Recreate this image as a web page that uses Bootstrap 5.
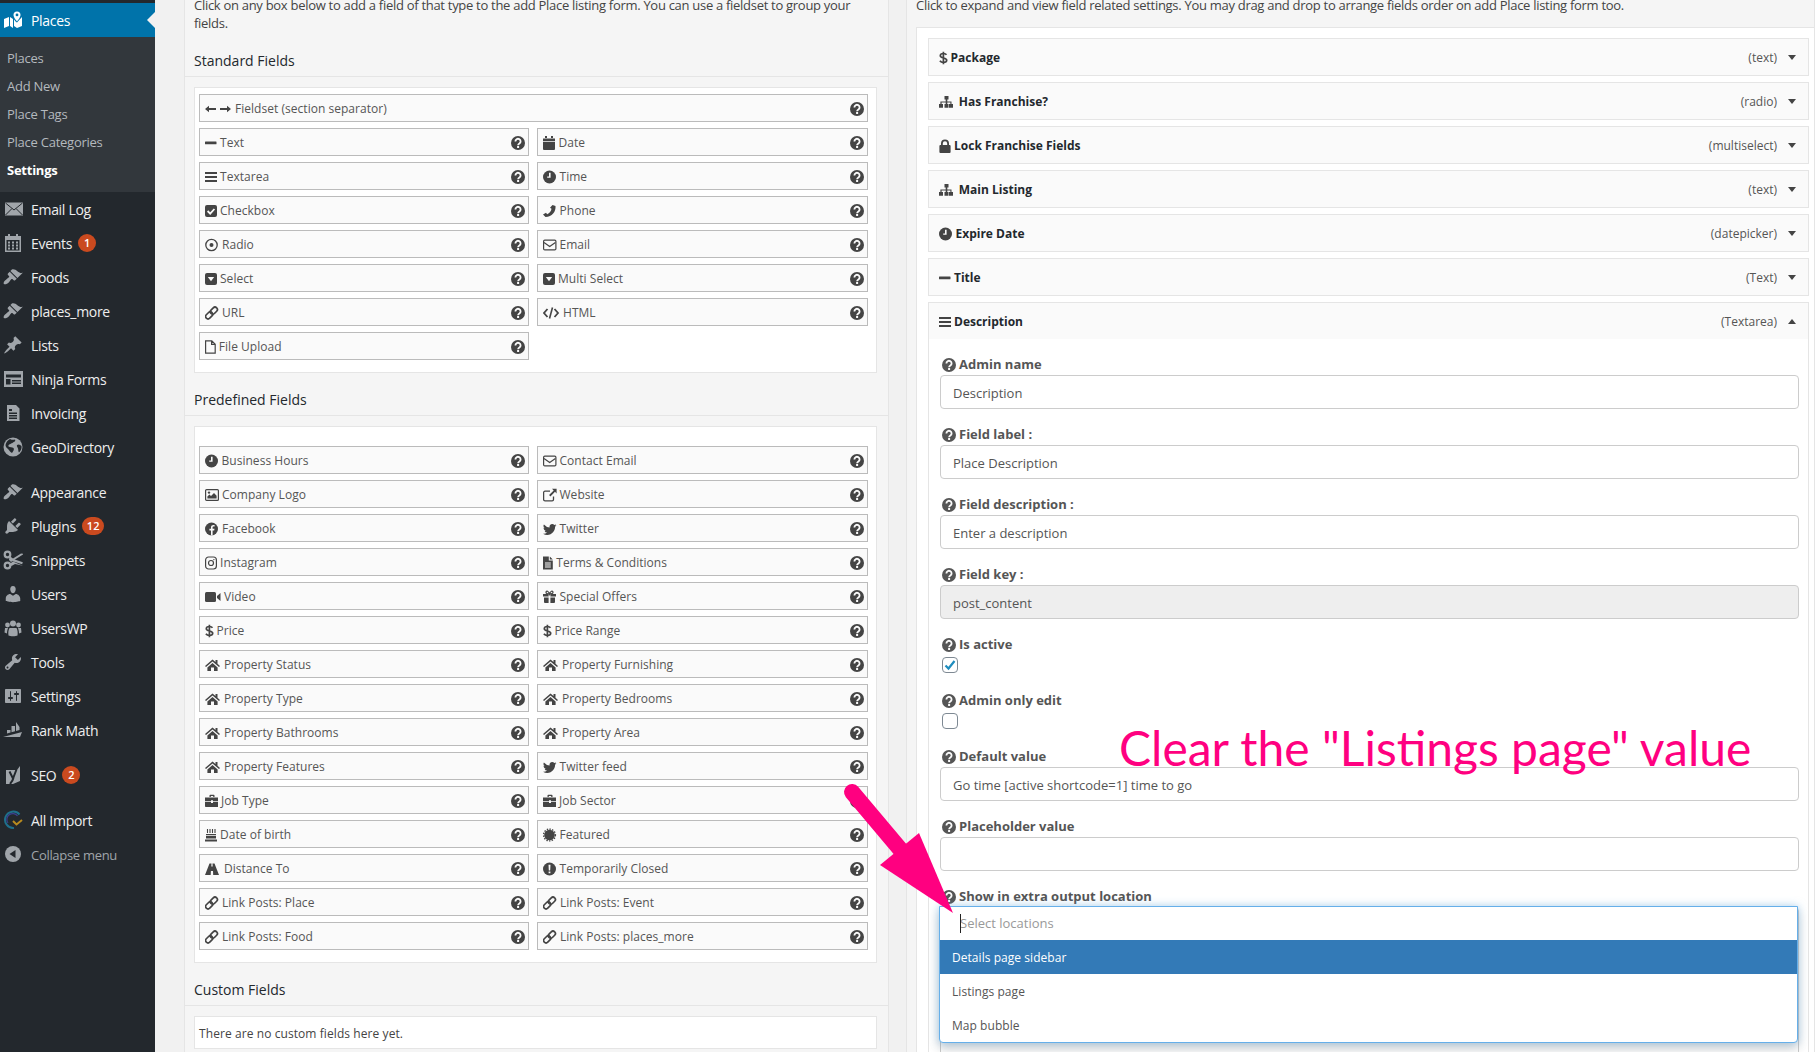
<!DOCTYPE html>
<html lang="en">
<head>
  <meta charset="UTF-8" />
  <meta name="viewport" content="width=device-width, initial-scale=1.0"/>
  <title>Place Settings</title>
  <link href="https://cdn.jsdelivr.net/npm/bootstrap@5.3.3/dist/css/bootstrap.min.css" rel="stylesheet">
  <style>
    html, body { height: 100%; }
    body { font-family: "Open Sans", sans-serif; font-size: 13px; color: #444; background: #f1f1f1; overflow: hidden; }
    .wp-shell { height: 1052px; overflow: hidden; position: relative; }

    /* admin menu */
    .wp-side { width: 155px; flex: 0 0 155px; background: #23282d; padding-top: 3px; }
    .side-item { height: 34px; color: #eee; font-size: 14px; letter-spacing: -.3px; padding-left: 31px; position: relative; }
    .side-item svg { position: absolute; left: 3px; top: 7px; fill: #a0a5aa; }
    .side-item.sel { background: #0073aa; color: #fff; }
    .side-item.sel svg { fill: #fff; }
    .side-item.sel::after { content: ""; position: absolute; right: 0; top: 9px; border: 8px solid transparent; border-right-color: #f1f1f1; border-left-width: 0; }
    .side-sub { background: #32373c; padding: 7px 0 8px; }
    .side-sub div { height: 28px; line-height: 28px; padding-left: 7px; color: #b4b9be; font-size: 13px; letter-spacing: -.25px; }
    .side-sub div.on { color: #fff; font-weight: 700; }
    .side-gap { height: 11px; }
    .side-item.side-muted { color: #a0a5aa; font-size: 13px; padding-top: 3px; }
    .side-num { background: #ca4a1f; color: #fff; font-size: 11px; font-weight: 600; letter-spacing: 0; height: 18px; min-width: 18px; padding: 0 5px; border-radius: 9px; margin-left: 6px; }

    /* panels */
    .wp-main { flex: 1 1 auto; display: flex; gap: 17px; padding-left: 29px; margin-top: -4px; min-width: 0; }
    .pane { background: #f5f5f5; border: 1px solid #e5e5e5; border-width: 0 1px; }
    .pane-left { width: 705px; flex: 0 0 705px; }
    .pane-right { flex: 1 1 auto; min-width: 0; padding-left: 9px; }
    .pane-note { margin: 0 0 19px; padding: 0 9px; line-height: 18px; color: #444; letter-spacing: -.29px; }
    .pane-right .pane-note { margin-bottom: 0; }
    .pane-head { font-size: 14px; line-height: 20px; color: #23282d; padding: 0 9px 5px; border-bottom: 1px solid #e5e5e5; margin: 17px 0 10px; }
    .white-box { background: #fff; border: 1px solid #e5e5e5; margin: 0 11px 0 9px; padding: 6px 5px 12px 4px; }
    .predef-box { padding-top: 19px; }
    .field-grid { display: grid; grid-template-columns: 330px 331px; column-gap: 8px; row-gap: 6px; }
    .field-btn { height: 28px; border: 1px solid #bbb; background: #fafafa; color: #555; font-size: 12px; letter-spacing: .03px; padding: 2px 3px 0 5px; display: flex; align-items: center; white-space: nowrap; }
    .field-btn.wide { grid-column: 1 / 3; }
    .fi { fill: #444; flex: none; margin-right: 3px; }
    .qm { fill: #444; flex: none; margin-left: auto; margin-right: 0; }
    .empty-box { margin: 0 11px 0 9px; background: #fff; border: 1px solid #e5e5e5; height: 33px; line-height: 33px; padding-left: 4px; font-size: 12px; letter-spacing: .08px; color: #444; }

    /* sortable list on the right */
    .sort-box { background: #fff; border: 1px solid #e5e5e5; margin-top: 13px; padding: 10px 0 0 11px; border-right: 0; min-height: 1100px; }
    .sort-row { height: 38px; border: 1px solid #e5e5e5; background: #fafafa; margin: 0 5px 6px 0; padding: 1px 12px 0 10px; display: flex; align-items: center; font-size: 12px; }
    .sort-row b { color: #23282d; font-weight: 700; }
    .sort-type { margin-left: auto; color: #555; }
    .sort-caret { width: 0; height: 0; border: 4px solid transparent; border-top: 5px solid #444; border-bottom: 0; margin-left: 11px; margin-right: 0; }
    .sort-caret.up { border-top: 0; border-bottom: 5px solid #444; }
    .sort-open { border: 1px solid #e5e5e5; border-top: 0; margin: -7px 5px 0 0; padding: 14px 9px 0 11px; background: #fff; }
    .form-rowx { margin-bottom: 14px; }
    .form-rowx label { display: flex; align-items: center; height: 22px; padding-top: 2px; font-weight: 700; font-size: 13px; color: #555; margin: 0; }
    .form-rowx label svg { fill: #555; margin: 0 3px 0 2px; }
    .form-control.wp-input { height: 34px; border-radius: 4px; border: 1px solid #ccc; font-size: 13px; color: #555; padding: 7px 12px 5px; box-shadow: none; }
    .form-control.wp-input:disabled { background: #eee; }
    .form-control.wp-input.loc-under { height: 160px; }
    .wp-check { width: 16px; height: 16px; border: 1px solid #7e8993; border-radius: 4px; background: #fff; margin: 2px 0 0 2px; display: flex; align-items: center; justify-content: center; }
    .check-row { margin-bottom: 16px; }
    .loc-wrap { position: relative; }
    .loc-drop { position: absolute; left: -1px; right: 1px; top: -1px; z-index: 3; background: #fff; border: 1px solid #66afe9; border-radius: 0 0 4px 4px; box-shadow: 0 0 8px rgba(102,175,233,.5), 0 6px 12px rgba(0,0,0,.18); }
    .loc-input { height: 33px; padding: 7px 0 0 20px; color: #999; position: relative; font-size: 13px; }
    .loc-input::before { content: ""; position: absolute; left: 20px; top: 7px; height: 19px; border-left: 1px solid #222; }
    .loc-opt { height: 34px; line-height: 36px; padding-left: 12px; color: #555; font-size: 12px; letter-spacing: .05px; }
    .loc-opt.hot { background: #337ab7; color: #fff; }

    /* pink note on top of the shot */
    .shot-note { position: absolute; left: 1119px; top: 718px; font-family: Lato, sans-serif; font-size: 48px; line-height: 60px; color: #ff0080; white-space: nowrap; z-index: 5; }
    .shot-arrow { position: absolute; left: 0; top: 0; z-index: 6; pointer-events: none; }
  </style>
</head>
<body>
  <div class="wp-shell d-flex">
    <div class="wp-side" id="sideMenu"></div>

    <div class="wp-main">
      <div class="pane pane-left">
        <p class="pane-note">Click on any box below to add a field of that type to the add Place listing form. You can use a fieldset to group your fields.</p>
        <div class="pane-head">Standard Fields</div>
        <div class="white-box"><div class="field-grid" id="stdFields"></div></div>
        <div class="pane-head">Predefined Fields</div>
        <div class="white-box predef-box"><div class="field-grid" id="preFields"></div></div>
        <div class="pane-head">Custom Fields</div>
        <div class="empty-box">There are no custom fields here yet.</div>
      </div>

      <div class="pane pane-right">
        <p class="pane-note ps-0">Click to expand and view field related settings. You may drag and drop to arrange fields order on add Place listing form too.</p>
        <div class="sort-box">
          <div id="sortRows"></div>
          <div class="sort-open" id="descForm"></div>
        </div>
      </div>
    </div>

    <div class="shot-note">Clear the "Listings page" value</div>
    <svg class="shot-arrow" width="1815" height="1052" viewBox="0 0 1815 1052">
      <line x1="852" y1="792" x2="905" y2="855" stroke="#ff0080" stroke-width="16" stroke-linecap="round"/>
      <polygon points="919,833 880,865 953,913" fill="#ff0080"/>
    </svg>
  </div>

  <script src="https://cdn.jsdelivr.net/npm/bootstrap@5.3.3/dist/js/bootstrap.bundle.min.js"></script>
  <script>
    const W = '#fafafa';
    const bird = 'M5.026 15c6.038 0 9.341-5.003 9.341-9.334 0-.14 0-.282-.006-.422A6.685 6.685 0 0 0 16 3.542a6.658 6.658 0 0 1-1.889.518 3.301 3.301 0 0 0 1.447-1.817 6.533 6.533 0 0 1-2.087.793A3.286 3.286 0 0 0 7.875 6.03a9.325 9.325 0 0 1-6.767-3.429 3.289 3.289 0 0 0 1.018 4.382A3.323 3.323 0 0 1 .64 6.575v.045a3.288 3.288 0 0 0 2.632 3.218 3.203 3.203 0 0 1-.865.115 3.23 3.23 0 0 1-.614-.057 3.283 3.283 0 0 0 3.067 2.277A6.588 6.588 0 0 1 .78 13.58a6.32 6.32 0 0 1-.78-.045A9.344 9.344 0 0 0 5.026 15z';

    // field icons: [advance width including the gap, svg body], drawn on a 14px high box
    const icons = {
      arrows: [30, '<path d="M0 7l4-3.200v2.200h7v2H4v2.200zM26 7l-4-3.200v2.200h-7v2h7v2.200z"/>'],
      minus: [15, '<rect y="5.600" width="11.500" height="2.600" rx=".5"/>'],
      cal: [15.5, '<path d="M2 0h2v2H2zM8 0h2v2H8zM0 2.500h12V5H0zM0 5.800h12V13a1 1 0 0 1-1 1H1a1 1 0 0 1-1-1z"/>'],
      bars: [15, '<path d="M0 2h12v2H0zM0 6h12v2H0zM0 10h12v2H0z"/>'],
      clock: [16.5, '<circle cx="6.500" cy="7" r="6.500"/><path d="M6 2.800h1.600v5H4.200V6.400H6z" fill="' + W + '"/>'],
      check: [15, '<rect y="1" width="12" height="12" rx="2"/><path d="M2.600 7l2.600 2.600 4.200-4.600" fill="none" stroke="' + W + '" stroke-width="1.800"/>'],
      phone: [16.5, '<path d="M9.500 1l3 1c.6 5.500-3.500 11-10 11L0 10.400l3-1.600 1.200 1.500c2.300-1 4-3.400 4.300-5.600L7 3.800z"/>'],
      dot: [17, '<circle cx="6.500" cy="7" r="5.700" fill="none" stroke="#444" stroke-width="1.300"/><circle cx="6.500" cy="7" r="2"/>'],
      env: [16.5, '<rect x=".6" y="2.100" width="12.300" height="9.800" rx="1.200" fill="none" stroke="#444" stroke-width="1.200"/><path d="M1 4.600l5.700 4 5.700-4" fill="none" stroke="#444" stroke-width="1.200"/>'],
      caret: [15, '<rect y="1" width="12" height="12" rx="2"/><path d="M2.800 5h6.400L6 9.200z" fill="' + W + '"/>'],
      link: [17, '<g transform="rotate(-45 6.500 7)" fill="none" stroke="#444" stroke-width="1.700"><rect x="-.8" y="4.600" width="8" height="4.800" rx="2.400"/><rect x="5.800" y="4.600" width="8" height="4.800" rx="2.400"/></g>'],
      code: [20, '<path d="M4.500 3L1 7l3.500 4M11.500 3L15 7l-3.500 4" fill="none" stroke="#444" stroke-width="1.800"/><path d="M9.500 1.500L6.500 12.500" stroke="#444" stroke-width="1.600"/>'],
      file: [13.8, '<path d="M.6.8h6.200l3.400 3.400v9H.6zM6.600 1v3.400h3.400" fill="none" stroke="#444" stroke-width="1.200"/>'],
      pic: [17, '<rect x=".6" y="1.600" width="12.800" height="10.800" rx="1" fill="none" stroke="#444" stroke-width="1.200"/><path d="M2.400 10.500V8.600l2-2 1.600 1.500 3-3 2.600 2.600v2.800z"/><circle cx="4" cy="4.600" r="1.200"/>'],
      ext: [16.5, '<path d="M10.500 8.500v3a1.400 1.400 0 0 1-1.400 1.400H2a1.400 1.400 0 0 1-1.400-1.400V4.600A1.400 1.400 0 0 1 2 3.200h5" fill="none" stroke="#444" stroke-width="1.300"/><path d="M9 .8h4.600v4.600l-1.600-1.600-4.600 4.600-1.300-1.300 4.600-4.600z"/>'],
      fb: [17, '<circle cx="6.500" cy="7" r="6.500"/><path d="M7.600 13.400V8.600h1.600l.3-1.900H7.600V5.600c0-.6.3-1 1-1h1V3c-1.900-.4-3.600.2-3.600 2.300v1.400H4.400v1.900H6v4.800z" fill="' + W + '"/>'],
      tw: [16.5, '<g transform="scale(.84) translate(0 .4)"><path d="' + bird + '"/></g>'],
      insta: [15, '<rect x=".6" y="1" width="10.800" height="12" rx="3" fill="none" stroke="#444" stroke-width="1.200"/><circle cx="6" cy="7" r="2.500" fill="none" stroke="#444" stroke-width="1.200"/><circle cx="8.900" cy="3.600" r=".7"/>'],
      doc: [13.3, '<path d="M0 .5h5.800v4h4v9H0zM6.800.5l3 3h-3z"/><path d="M2 7h5.800M2 9h5.800M2 11h5.800" stroke="' + W + '" stroke-width="1"/>'],
      video: [19, '<rect y="2" width="11" height="10" rx="1.500"/><path d="M12 6l3.500-3v8L12 8z"/>'],
      gift: [16.5, '<path d="M0 4h5.600v2.600H0zM7.400 4H13v2.600H7.400zM1 7.400h4.600V13H2a1 1 0 0 1-1-1zM7.400 7.400H12V12a1 1 0 0 1-1 1H7.400z"/><path d="M6.400 4C4 4 2.800 3.400 3 2c.3-1.600 2.600-1.200 3.500 2 .9-3.200 3.200-3.600 3.500-2 .2 1.400-1 2-3.600 2z" fill="none" stroke="#444" stroke-width="1.200"/>'],
      dollar: [11.5, '<path d="M7.500 3.800C6.800 2.800 5.800 2.500 4.400 2.500 2.700 2.500 1.300 3.300 1.300 4.800 1.300 7.800 7.700 6.200 7.700 9.300 7.700 10.800 6.200 11.500 4.400 11.500 3 11.500 1.700 11 .9 9.800M4.400.8V13.200" fill="none" stroke="#444" stroke-width="1.700"/>'],
      home: [19, '<path d="M7.500 1.600L0 8l1 1.100 6.500-5.600L14 9.100 15 8l-2.500-2.200V2h-2v2z"/><path d="M2.400 9.400l5.100-4.400 5.100 4.400V13H9V9.600H6V13H2.400z"/>'],
      case: [16, '<path d="M4.500 3V1.600A.8.8 0 0 1 5.300.8h3.400a.8.8 0 0 1 .8.8V3h-1.300V2.100H5.800V3zM0 3.400h14v3.800H8v-1H6v1H0zM0 8h6v1h2V8h6v4.200a.8.8 0 0 1-.8.8H.8a.8.8 0 0 1-.8-.8z"/>'],
      cake: [15, '<path d="M1 8h10v2.600H1zM0 11.400h12V13.500H0zM1 7.200h10V6H1z"/><path d="M2.500 1v4M5 1v4M7.500 1v4M10 1v4" stroke="#444" stroke-width="1.100"/>'],
      cert: [16.5, '<circle cx="6.500" cy="7" r="5.300"/><circle cx="6.500" cy="7" r="5.900" fill="none" stroke="#444" stroke-width="1.400" stroke-dasharray="1.400 1.300"/>'],
      road: [19, '<path d="M4.500 1.500h2l-.2 3h1.400l-.2-3h2l4.500 11.500H8.200L8 9H5.900l-.2 4H0z"/>'],
      warn: [16.5, '<circle cx="6.500" cy="7" r="6.500"/><path d="M5.500 2.800h2L7.200 8.600H5.800zM5.600 9.600h1.800v1.700H5.600z" fill="' + W + '"/>'],
      tree: [19.8, '<path d="M5.500 1h4v3.400H8.300v2h4.200V9H14v3.800h-4V9h1.400V7.600H8.300V9h1.200v3.800h-4V9h1.200V7.600H2.600V9H4v3.800H0V9h1.400V6.400h5.300v-2H5.500z"/>'],
      lock: [15, '<path d="M2 6V4.400a4 4 0 0 1 8 0V6h.6a1 1 0 0 1 1 1v6a1 1 0 0 1-1 1H1.400a1 1 0 0 1-1-1V7a1 1 0 0 1 1-1zM3.800 6h4.400V4.400a2.200 2.200 0 0 0-4.400 0z"/>']
    };
    const svgIcon = (name) => {
      const [adv, body] = icons[name];
      const w = Math.max(adv - 3, 1);
      return `<svg class="fi" width="${w}" height="14" viewBox="0 0 ${w} 14" aria-hidden="true">${body}</svg>`;
    };
    const helpMark = (cls, size) => `<svg class="${cls}" width="${size}" height="${size}" viewBox="0 0 14 14" aria-hidden="true"><circle cx="7" cy="7" r="7"/><path d="M4.400 5.500a2.600 2.600 0 1 1 4 2.100c-.9.6-1.300.9-1.300 1.700" fill="none" stroke="#fafafa" stroke-width="1.800"/><rect x="6.100" y="10" width="2" height="2" fill="#fafafa"/></svg>`;

    const standard = [
      ['arrows', 'Fieldset (section separator)', true],
      ['minus', 'Text'], ['cal', 'Date'],
      ['bars', 'Textarea'], ['clock', 'Time'],
      ['check', 'Checkbox'], ['phone', 'Phone'],
      ['dot', 'Radio'], ['env', 'Email'],
      ['caret', 'Select'], ['caret', 'Multi Select'],
      ['link', 'URL'], ['code', 'HTML'],
      ['file', 'File Upload']
    ];
    const predefined = [
      ['clock', 'Business Hours'], ['env', 'Contact Email'],
      ['pic', 'Company Logo'], ['ext', 'Website'],
      ['fb', 'Facebook'], ['tw', 'Twitter'],
      ['insta', 'Instagram'], ['doc', 'Terms &amp; Conditions'],
      ['video', 'Video'], ['gift', 'Special Offers'],
      ['dollar', 'Price'], ['dollar', 'Price Range'],
      ['home', 'Property Status'], ['home', 'Property Furnishing'],
      ['home', 'Property Type'], ['home', 'Property Bedrooms'],
      ['home', 'Property Bathrooms'], ['home', 'Property Area'],
      ['home', 'Property Features'], ['tw', 'Twitter feed'],
      ['case', 'Job Type'], ['case', 'Job Sector'],
      ['cake', 'Date of birth'], ['cert', 'Featured'],
      ['road', 'Distance To'], ['warn', 'Temporarily Closed'],
      ['link', 'Link Posts: Place'], ['link', 'Link Posts: Event'],
      ['link', 'Link Posts: Food'], ['link', 'Link Posts: places_more']
    ];
    const fieldBtn = ([icon, label, wide]) => `<div class="field-btn${wide ? ' wide' : ''}">${svgIcon(icon)}<span>${label}</span>${helpMark('qm', 14)}</div>`;
    document.getElementById('stdFields').innerHTML = standard.map(fieldBtn).join('');
    document.getElementById('preFields').innerHTML = predefined.map(fieldBtn).join('');

    // right hand sortable rows
    const rows = [
      ['dollar', 'Package', '(text)'],
      ['tree', 'Has Franchise?', '(radio)'],
      ['lock', 'Lock Franchise Fields', '(multiselect)'],
      ['tree', 'Main Listing', '(text)'],
      ['clock', 'Expire Date', '(datepicker)'],
      ['minus', 'Title', '(Text)'],
      ['bars', 'Description', '(Textarea)', true]
    ];
    document.getElementById('sortRows').innerHTML = rows.map(([icon, name, type, open]) =>
      `<div class="sort-row">${svgIcon(icon)}<b>${name}</b><span class="sort-type">${type}</span><span class="sort-caret${open ? ' up' : ''}"></span></div>`).join('');

    const inputField = (label, value, disabled) => `
      <div class="form-rowx"><label>${helpMark('', 14)}${label}</label>
      <input type="text" class="form-control wp-input" value="${value}"${disabled ? ' disabled' : ''}></div>`;
    const checkField = (label, on) => `
      <div class="form-rowx check-row"><label>${helpMark('', 14)}${label}</label>
      <div class="wp-check">${on ? '<svg width="12" height="12" viewBox="0 0 12 12"><path d="M1.500 6.500l3 3 6-7.500" fill="none" stroke="#1e8cbe" stroke-width="2.200"/></svg>' : ''}</div></div>`;
    document.getElementById('descForm').innerHTML =
      inputField('Admin name', 'Description') +
      inputField('Field label :', 'Place Description') +
      inputField('Field description :', 'Enter a description') +
      inputField('Field key :', 'post_content', true) +
      checkField('Is active', true) +
      checkField('Admin only edit', false) +
      inputField('Default value', 'Go time [active shortcode=1] time to go') +
      inputField('Placeholder value', '') +
      `<div class="form-rowx"><label>${helpMark('', 14)}Show in extra output location</label>
        <div class="loc-wrap">
          <div class="form-control wp-input loc-under"></div>
          <div class="loc-drop" id="locDrop">
            <div class="loc-input">Select locations</div>
            <div class="loc-opt hot">Details page sidebar</div>
            <div class="loc-opt">Listings page</div>
            <div class="loc-opt">Map bubble</div>
          </div>
        </div></div>`;

    // admin menu
    const sideIcons = {
      places: '<path d="M1 9l5-2v9l-5 2zM7 7l3 2v9l-3-2zM11 9.500l2 2.500 1 .5 5-5.500v9l-5 2-3-2z"/><path fill-rule="evenodd" d="M14 1.500a3.500 3.500 0 0 1 3.500 3.500c0 2.500-3.500 6.500-3.500 6.500S10.500 7.500 10.500 5A3.500 3.500 0 0 1 14 1.500zm0 2a1.400 1.400 0 1 0 0 2.800 1.400 1.400 0 0 0 0-2.800z"/>',
      mail: '<path d="M2 3.500h18v13H2z"/><path d="M2.500 4L11 11l8.500-7M2.500 16L9 9.500M19.500 16L13 9.500" stroke="#23282d" stroke-width="1" fill="none"/>',
      cal: '<path fill-rule="evenodd" d="M2 3h3V1h2v2h6V1h2v2h3v16H2zM3.500 7v10.500h13V7z"/><path d="M5 8.500h2v2H5zM9 8.500h2v2H9zM13 8.500h2v2h-2zM5 11.500h2v2H5zM9 11.500h2v2H9zM13 11.500h2v2h-2zM5 14.500h2v2H5zM9 14.500h2v2H9zM13 14.500h2v2h-2z"/>',
      brush: '<path d="M14.480 11.060L7.410 3.990l1.500-1.500c.5-.56 2.300-.47 3.510.32 1.210.8 1.430 1.280 2.910 2.100 1.180.64 2.450 1.260 4.450.85zm-.71.71L6.700 4.700 4.930 6.470c-.39.39-.39 1.020 0 1.410l1.060 1.060c.39.39.39 1.030 0 1.420-.6.6-1.430 1.110-2.210 1.690-.35.26-.7.53-1.010.84C1.430 13.430.05 15.960 1 17c1.060.96 3.560-.46 4.690-1.600.31-.31.58-.66.84-1.010.58-.78 1.090-1.610 1.690-2.210.39-.39 1.030-.39 1.420 0l1.060 1.060c.39.39 1.020.39 1.410 0z"/>',
      pin: '<path d="M10.440 3.020l1.820-1.820 6.360 6.350-1.830 1.820c-1.050-.68-2.480-.57-3.410.36l-.75.75c-.92.93-1.040 2.350-.35 3.410l-1.830 1.820-2.410-2.410-2.800 2.790c-.42.42-3.380 2.710-3.800 2.290s1.860-3.390 2.280-3.810l2.790-2.790L4.100 9.360l1.830-1.820c1.050.69 2.480.57 3.400-.36l.75-.75c.93-.92 1.050-2.350.36-3.410z"/>',
      forms: '<path d="M1 2h19v16H1zM3 5.500v3h15v-3zM3 10v5.500h4.500V10zM9 11v1.500h9V11zM9 13.500V15h9v-1.500z" fill-rule="evenodd"/>',
      invoice: '<path d="M4 2h9l3.500 3.500V18H4zM6 6h3v2H6zM6 9.500v1.500h8V9.500zM6 12v1.500h8V12zM6 14.500V16h8v-1.500z" fill-rule="evenodd"/>',
      globe: '<circle cx="10" cy="10" r="9.500"/><path d="M7 2c2 1 3.500 1 5 .5 1 1.500-1 2.500-2 3-.5 1-2 .5-2.500 1.500-1 .5-2.500.5-2 2.500 1.500 1 3.500.5 5 1.500 1 1 0 3-1.500 5-2.500-1-2.500-3-4-4-1-1-2.500-2-2.500-4C3 5 5 3 7 2zM14 8c1.500-1 3-.5 4.500 1 .5 3-1 5-2.500 6.500-1-1-.5-3-1-4-.5-1.500-1.500-2-1-3.500z" fill="#23282d"/>',
      plug: '<path d="M13.110 4.360L9.870 7.600 8 5.730l3.240-3.240c.35-.34 1.050-.2 1.560.32.52.51.66 1.210.31 1.550zm-8 1.770l.91-1.120 9.010 9.010-1.190.84c-.71.71-2.630 1.160-3.820 1.160H6.140L4.900 17.260c-.59.59-1.540.59-2.120 0-.59-.58-.59-1.530 0-2.120l1.240-1.240v-3.880c0-1.130.4-3.190 1.090-3.890zm7.260 3.970l3.240-3.240c.34-.35 1.040-.21 1.550.31.52.51.66 1.210.31 1.550l-3.240 3.250z"/>',
      scissors: '<circle cx="4.500" cy="4.500" r="2.800" fill="none" stroke="#a0a5aa" stroke-width="2.200"/><circle cx="4.500" cy="15.500" r="2.800" fill="none" stroke="#a0a5aa" stroke-width="2.200"/><path d="M6.500 6L10 8.500 18 3.500l3 .5L8 12 6 10zM6.500 14L10 11.500 18 15l3 1-9-2-3.500 2z"/><rect x="10" y="9" width="10" height="2.200" transform="rotate(18 10 10)"/>',
      user: '<path d="M10 9.250c-2.270 0-2.730-3.440-2.730-3.440C7 4.020 7.820 2 9.970 2c2.160 0 2.980 2.020 2.710 3.810 0 0-.41 3.440-2.680 3.440zm0 2.570L12.720 10c2.390 0 4.520 2.330 4.520 4.530v2.490s-3.650 1.130-7.240 1.130c-3.650 0-7.240-1.130-7.240-1.130v-2.490c0-2.250 1.940-4.480 4.470-4.480z"/>',
      group: '<circle cx="10" cy="5.500" r="3"/><circle cx="4.500" cy="7" r="2.400"/><circle cx="15.500" cy="7" r="2.400"/><path d="M6.500 10h7c1 2 1.500 4 1 7.500-1.500 1-7.500 1-9 0-.5-3.500 0-5.500 1-7.500zM2 10h3c-.7 2-1 3.500-1 5.500l-2.500-1zM15 10h3l.5 4.500-2.500 1c0-2-.3-3.500-1-5.500z"/>',
      wrench: '<path fill-rule="evenodd" d="M16.680 9.770c-1.340 1.340-3.300 1.670-4.950.99l-5.410 6.520c-.99.99-2.590.99-3.580 0s-.99-2.590 0-3.570l6.520-5.420c-.68-1.650-.35-3.610.99-4.950 1.280-1.280 3.120-1.620 4.720-1.060l-2.890 2.890 2.820 2.820 2.860-2.870c.53 1.580.18 3.390-1.080 4.650zM3.810 16.210c.4.39 1.040.39 1.430 0 .4-.4.4-1.040 0-1.430-.39-.4-1.030-.4-1.430 0-.39.39-.39 1.030 0 1.430z"/>',
      sliders: '<path fill-rule="evenodd" d="M18 16V4c0-.55-.45-1-1-1H3c-.55 0-1 .45-1 1v12c0 .55.45 1 1 1h14c.55 0 1-.45 1-1zM8 11h1c.55 0 1 .45 1 1s-.45 1-1 1H8v1.500c0 .28-.22.5-.5.5s-.5-.22-.5-.5V13H6c-.55 0-1-.45-1-1s.45-1 1-1h1V5.500c0-.28.22-.5.5-.5s.5.22.5.5V11zm5-2h-1c-.55 0-1-.45-1-1s.45-1 1-1h1V5.500c0-.28.22-.5.5-.5s.5.22.5.5V7h1c.55 0 1 .45 1 1s-.45 1-1 1h-1v5.500c0 .28-.22.5-.5.5s-.5-.22-.5-.5V9z"/>',
      rank: '<path d="M0 17l19-5-2 5H2zM4 13.500V10h3.500v2.600zM8.500 12.200V6H12v5.300zM13 10.900V2l3.500 5v3z"/>',
      seo: '<path d="M2 5h11l3-4v15l-7 3H2z" transform="translate(1 0)"/><path d="M5.500 6.500L9 13.500l3.500-9M9.500 12.500C9 15.500 7.500 17.500 6 19" fill="none" stroke="#23282d" stroke-width="2" transform="translate(1 0)"/>',
      collapse: '<circle cx="10" cy="10" r="8"/><path d="M12.500 6v8L6.500 10z" fill="#23282d"/>'
    };
    const importIcon = '<svg width="20" height="20" viewBox="0 0 20 20" aria-hidden="true"><path d="M16.500 4.500A8.200 8.200 0 1 0 11 18" fill="none" stroke="#1f6f8b" stroke-width="2"/><path d="M14.500 6A5.800 5.800 0 0 0 5 13" fill="none" stroke="#3c3f8f" stroke-width="1.200"/><path d="M10 11l3.500 3.500L19 10" fill="none" stroke="#b88a1f" stroke-width="2"/></svg>';
    const sideIcon = (n) => `<svg width="20" height="20" viewBox="0 0 20 20" aria-hidden="true">${sideIcons[n]}</svg>`;
    const sideList = (items) => items.map(([icon, label, num, cls]) => `<div class="side-item d-flex align-items-center ${cls || ''}">${icon === 'import' ? importIcon : sideIcon(icon)}<span>${label}</span>${num ? `<span class="side-num d-flex align-items-center justify-content-center">${num}</span>` : ''}</div>`).join('');
    document.getElementById('sideMenu').innerHTML =
      sideList([['places', 'Places', '', 'sel']]) +
      '<div class="side-sub"><div>Places</div><div>Add New</div><div>Place Tags</div><div>Place Categories</div><div class="on">Settings</div></div>' +
      sideList([['mail', 'Email Log'], ['cal', 'Events', '1'], ['brush', 'Foods'], ['brush', 'places_more'], ['pin', 'Lists'], ['forms', 'Ninja Forms'], ['invoice', 'Invoicing'], ['globe', 'GeoDirectory']]) +
      '<div class="side-gap"></div>' +
      sideList([['brush', 'Appearance'], ['plug', 'Plugins', '12'], ['scissors', 'Snippets'], ['user', 'Users'], ['group', 'UsersWP'], ['wrench', 'Tools'], ['sliders', 'Settings'], ['rank', 'Rank Math']]) +
      '<div class="side-gap"></div>' +
      sideList([['seo', 'SEO', '2']]) +
      '<div class="side-gap"></div>' +
      sideList([['import', 'All Import'], ['collapse', 'Collapse menu', '', 'side-muted']]);
  </script>
</body>
</html>
